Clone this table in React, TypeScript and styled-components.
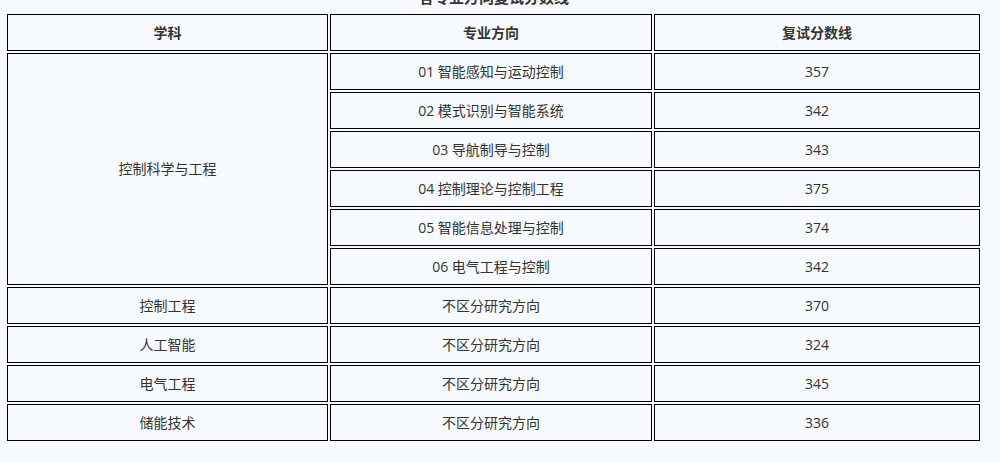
import React from 'react';
import styled, { createGlobalStyle } from 'styled-components';

const GlobalStyle = createGlobalStyle`
  html, body {
    margin: 0;
    padding: 0;
    background: #f7faff;
    overflow: hidden;
  }
  body {
    font-family: "Open Sans", "Noto Sans CJK SC", sans-serif;
    color: #333;
  }
`;

const Page = styled.div`
  padding: 0 5px;
  margin-top: -13px;
`;

const Title = styled.div`
  height: 20px;
  line-height: 20px;
  font-size: 15px;
  font-weight: bold;
  text-align: center;
  padding-right: 12px;
`;

const Table = styled.table`
  margin-top: 5px;
  width: 977px;
  table-layout: fixed;
  border-collapse: separate;
  border-spacing: 2px;
  font-size: 14px;
`;

const Row = styled.tr`
  height: 37px;
`;

const Cell = styled.td<{ $head?: boolean }>`
  border: 1px solid #000;
  padding: 0;
  text-align: center;
  vertical-align: middle;
  font-weight: ${({ $head }) => ($head ? 'bold' : 'normal')};
  line-height: 20px;
`;

type Item = { name: string; score: string };

const control: Item[] = [
  { name: '01 智能感知与运动控制', score: '357' },
  { name: '02 模式识别与智能系统', score: '342' },
  { name: '03 导航制导与控制', score: '343' },
  { name: '04 控制理论与控制工程', score: '375' },
  { name: '05 智能信息处理与控制', score: '374' },
  { name: '06 电气工程与控制', score: '342' },
];

const others = [
  { subject: '控制工程', score: '370' },
  { subject: '人工智能', score: '324' },
  { subject: '电气工程', score: '345' },
  { subject: '储能技术', score: '336' },
];

export default function App() {
  return (
    <Page>
      <GlobalStyle />
      <Title>各专业方向复试分数线</Title>
      <Table>
        <colgroup>
          <col style={{ width: 321 }} />
          <col style={{ width: 322 }} />
          <col style={{ width: 326 }} />
        </colgroup>
        <tbody>
          <Row>
            <Cell $head>学科</Cell>
            <Cell $head>专业方向</Cell>
            <Cell $head>复试分数线</Cell>
          </Row>
          {control.map((c, i) => (
            <Row key={c.name}>
              {i === 0 && <Cell rowSpan={control.length}>控制科学与工程</Cell>}
              <Cell>{c.name}</Cell>
              <Cell>{c.score}</Cell>
            </Row>
          ))}
          {others.map((o) => (
            <Row key={o.subject}>
              <Cell>{o.subject}</Cell>
              <Cell>不区分研究方向</Cell>
              <Cell>{o.score}</Cell>
            </Row>
          ))}
        </tbody>
      </Table>
    </Page>
  );
}
